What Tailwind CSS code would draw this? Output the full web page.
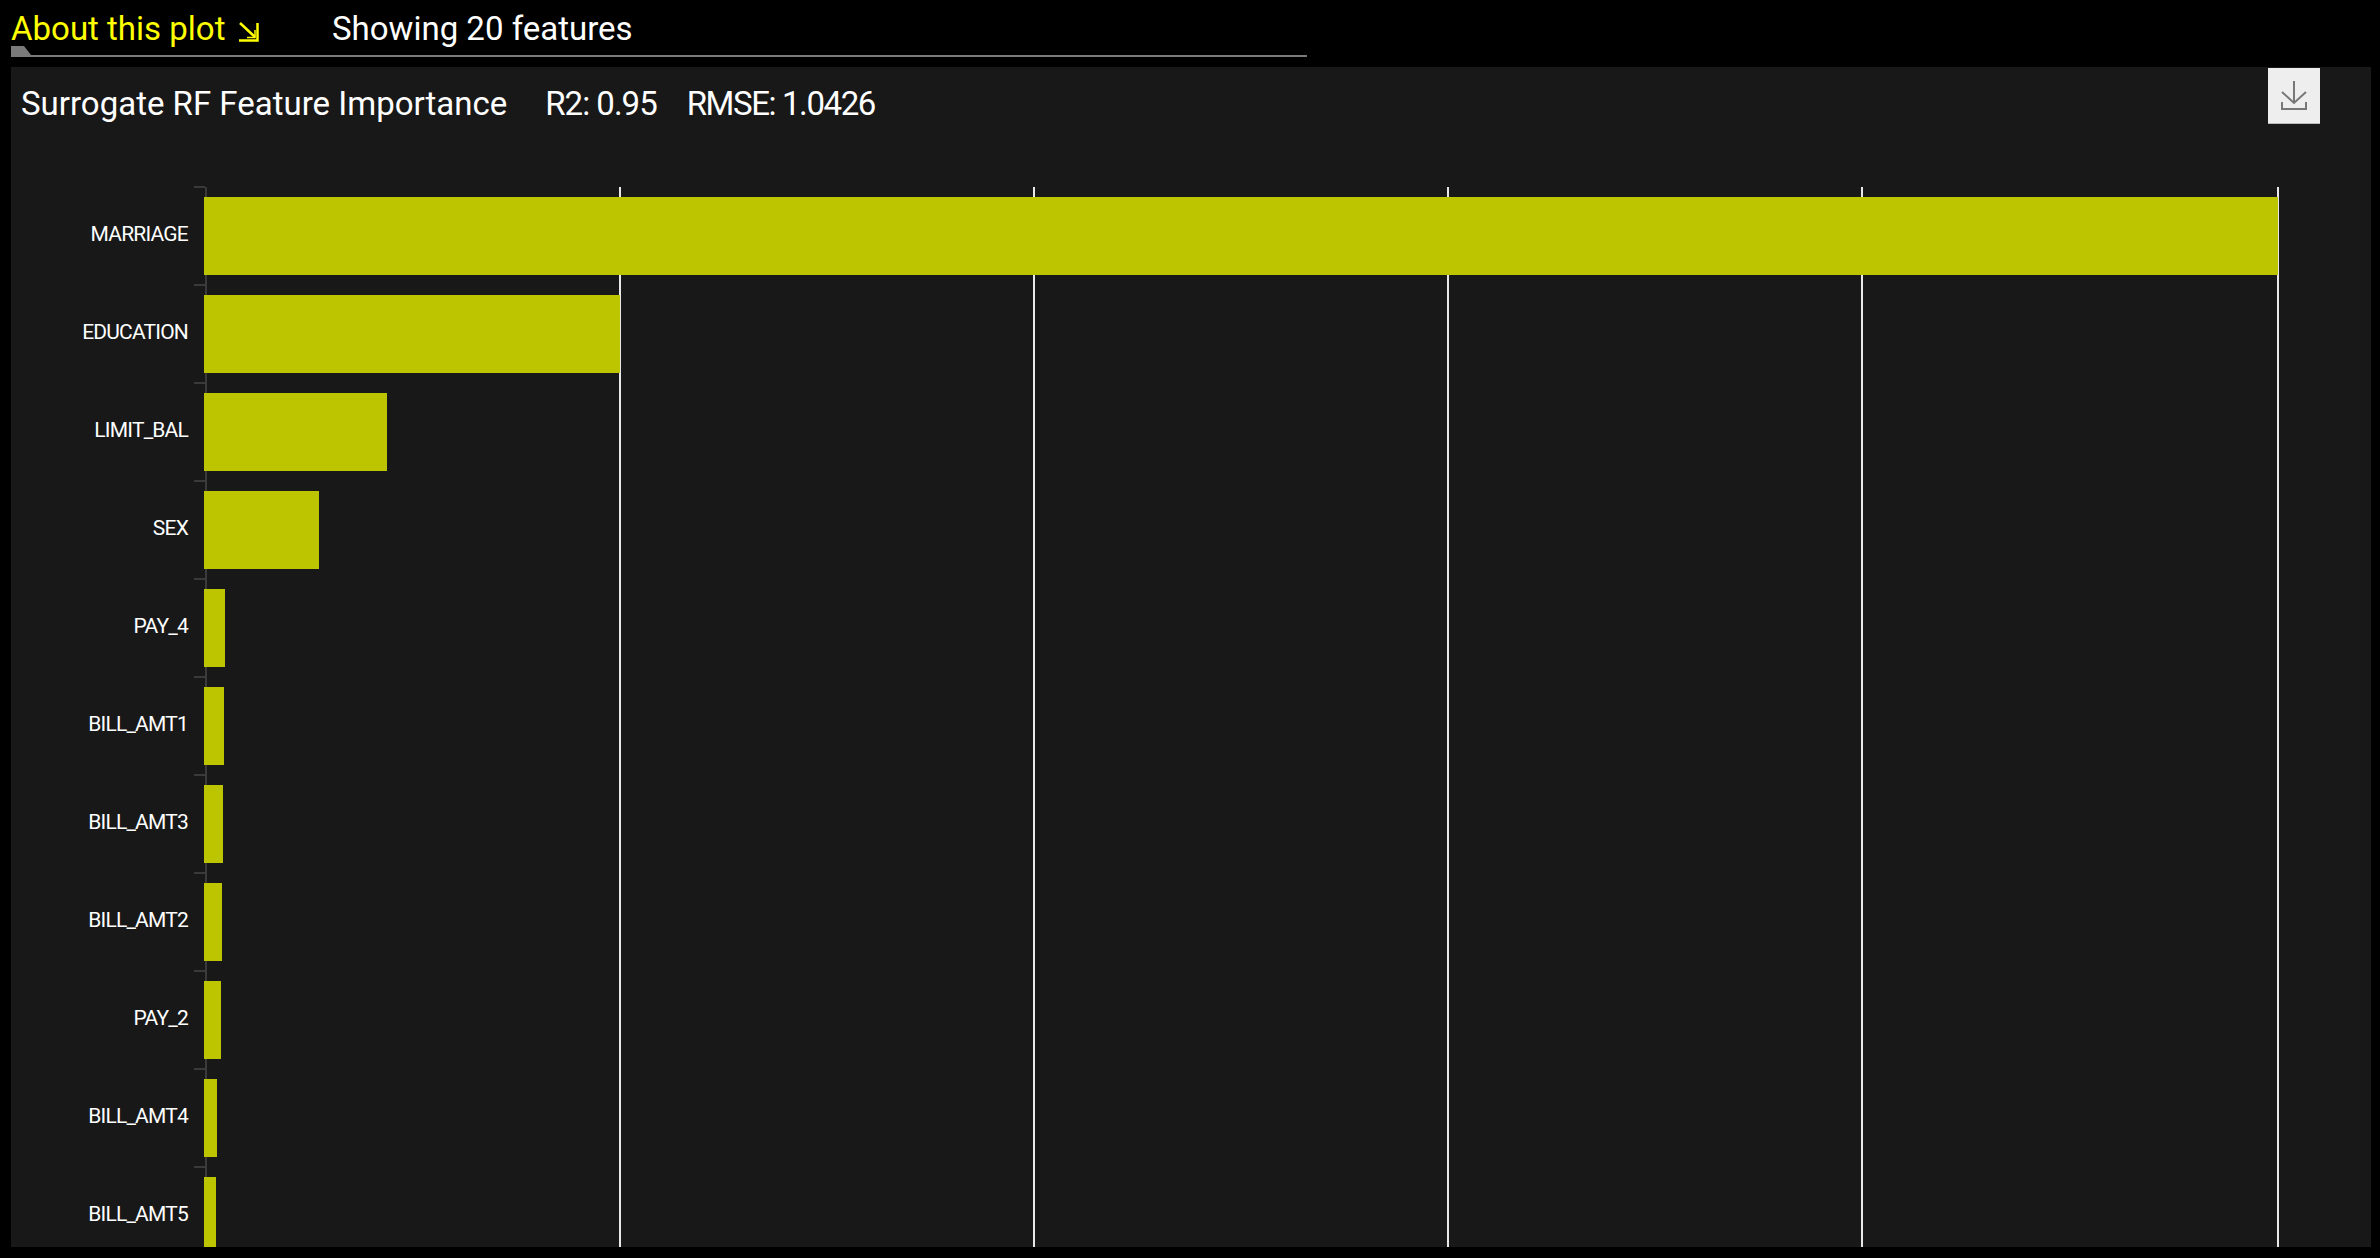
<!DOCTYPE html>
<html lang="en">
<head>
    <meta charset="UTF-8">
    <title>Surrogate RF Feature Importance</title>
    <script src="https://cdn.jsdelivr.net/npm/@tailwindcss/browser@4"></script>
</head>
<body class="bg-black h-[1258px] overflow-hidden text-white font-['Roboto',sans-serif]">
    <!-- Tabs -->
    <div class="relative w-[1296px] ml-[11px] h-[57px] border-b-2 border-[#7a7a7a]">
        <div class="flex items-center h-[55px] pt-[2px] text-[33px] leading-none">
            <span class="w-[321px] flex items-center text-[#ffff00] whitespace-nowrap">
                About this plot
                <svg class="ml-[14px] mt-[6px]" width="20" height="20" viewBox="0 0 20 20" fill="none" stroke="#ffff00" stroke-width="2.5">
                    <path d="M1 1L16 15"/>
                    <path d="M18.5 1V18.5H0"/>
                    <path d="M16 8V15.5H8" stroke-width="1.5"/>
                </svg>
            </span>
            <span class="whitespace-nowrap">Showing 20 features</span>
        </div>
        <div class="absolute left-0 bottom-0 w-[20px] h-[9px] bg-[#7a7a7a] [clip-path:polygon(0_0,13px_0,100%_100%,0_100%)]"></div>
    </div>

    <!-- Plot panel -->
    <div class="relative mt-[10px] mx-[11px] w-[2360px] h-[1180px] bg-[#181818] overflow-hidden">
        <div class="flex items-center h-[72px] px-[10px] text-[33px] leading-none whitespace-nowrap">
            <span>Surrogate RF Feature Importance</span>
            <span class="ml-[38px] tracking-[-1px]">R2: 0.95</span>
            <span class="ml-[30px] tracking-[-1.4px]">RMSE: 1.0426</span>
        </div>

        <button class="absolute left-[2257px] top-[1px] w-[52px] h-[56px] bg-[#eeeeee] border-b border-[#bbbbbb] flex items-center justify-center">
            <svg width="26" height="30" viewBox="0 0 26 30" fill="none" stroke="#777777" stroke-width="2">
                <path d="M13 0V22M1 11L13 22L25 11"/>
                <path d="M1 21V28H25V21"/>
            </svg>
        </button>

        <!-- Gridlines and axis -->
        <div class="absolute left-[194px] top-[120px] bottom-0 w-[2px] bg-[#3a3a3a]"></div>
        <div class="absolute left-[608px] top-[120px] bottom-0 w-[2px] bg-[#e8e8e8]"></div>
        <div class="absolute left-[1022px] top-[120px] bottom-0 w-[2px] bg-[#e8e8e8]"></div>
        <div class="absolute left-[1436px] top-[120px] bottom-0 w-[2px] bg-[#e8e8e8]"></div>
        <div class="absolute left-[1850px] top-[120px] bottom-0 w-[2px] bg-[#e8e8e8]"></div>
        <div class="absolute left-[2266px] top-[120px] bottom-0 w-[2px] bg-[#e8e8e8]"></div>

        <!-- Bars -->
        <div class="relative mt-[48px] text-[21px] leading-none tracking-[-0.8px]">
            <div class="relative flex h-[98px] items-center">
                <span class="w-[177px] shrink-0 text-right pb-[4px]">MARRIAGE</span>
                <span class="absolute left-[183px] top-[-1px] w-[11px] h-[2px] bg-[#3a3a3a]"></span>
                <div class="h-[78px] ml-[16px] bg-[#bcc500]" style="width: 2074px"></div>
            </div>
            <div class="relative flex h-[98px] items-center">
                <span class="w-[177px] shrink-0 text-right pb-[4px]">EDUCATION</span>
                <span class="absolute left-[183px] top-[-1px] w-[11px] h-[2px] bg-[#3a3a3a]"></span>
                <div class="h-[78px] ml-[16px] bg-[#bcc500]" style="width: 416px"></div>
            </div>
            <div class="relative flex h-[98px] items-center">
                <span class="w-[177px] shrink-0 text-right pb-[4px]">LIMIT_BAL</span>
                <span class="absolute left-[183px] top-[-1px] w-[11px] h-[2px] bg-[#3a3a3a]"></span>
                <div class="h-[78px] ml-[16px] bg-[#bcc500]" style="width: 183px"></div>
            </div>
            <div class="relative flex h-[98px] items-center">
                <span class="w-[177px] shrink-0 text-right pb-[4px]">SEX</span>
                <span class="absolute left-[183px] top-[-1px] w-[11px] h-[2px] bg-[#3a3a3a]"></span>
                <div class="h-[78px] ml-[16px] bg-[#bcc500]" style="width: 115px"></div>
            </div>
            <div class="relative flex h-[98px] items-center">
                <span class="w-[177px] shrink-0 text-right pb-[4px]">PAY_4</span>
                <span class="absolute left-[183px] top-[-1px] w-[11px] h-[2px] bg-[#3a3a3a]"></span>
                <div class="h-[78px] ml-[16px] bg-[#bcc500]" style="width: 21px"></div>
            </div>
            <div class="relative flex h-[98px] items-center">
                <span class="w-[177px] shrink-0 text-right pb-[4px]">BILL_AMT1</span>
                <span class="absolute left-[183px] top-[-1px] w-[11px] h-[2px] bg-[#3a3a3a]"></span>
                <div class="h-[78px] ml-[16px] bg-[#bcc500]" style="width: 20px"></div>
            </div>
            <div class="relative flex h-[98px] items-center">
                <span class="w-[177px] shrink-0 text-right pb-[4px]">BILL_AMT3</span>
                <span class="absolute left-[183px] top-[-1px] w-[11px] h-[2px] bg-[#3a3a3a]"></span>
                <div class="h-[78px] ml-[16px] bg-[#bcc500]" style="width: 19px"></div>
            </div>
            <div class="relative flex h-[98px] items-center">
                <span class="w-[177px] shrink-0 text-right pb-[4px]">BILL_AMT2</span>
                <span class="absolute left-[183px] top-[-1px] w-[11px] h-[2px] bg-[#3a3a3a]"></span>
                <div class="h-[78px] ml-[16px] bg-[#bcc500]" style="width: 18px"></div>
            </div>
            <div class="relative flex h-[98px] items-center">
                <span class="w-[177px] shrink-0 text-right pb-[4px]">PAY_2</span>
                <span class="absolute left-[183px] top-[-1px] w-[11px] h-[2px] bg-[#3a3a3a]"></span>
                <div class="h-[78px] ml-[16px] bg-[#bcc500]" style="width: 17px"></div>
            </div>
            <div class="relative flex h-[98px] items-center">
                <span class="w-[177px] shrink-0 text-right pb-[4px]">BILL_AMT4</span>
                <span class="absolute left-[183px] top-[-1px] w-[11px] h-[2px] bg-[#3a3a3a]"></span>
                <div class="h-[78px] ml-[16px] bg-[#bcc500]" style="width: 13px"></div>
            </div>
            <div class="relative flex h-[98px] items-center">
                <span class="w-[177px] shrink-0 text-right pb-[4px]">BILL_AMT5</span>
                <span class="absolute left-[183px] top-[-1px] w-[11px] h-[2px] bg-[#3a3a3a]"></span>
                <div class="h-[78px] ml-[16px] bg-[#bcc500]" style="width: 12px"></div>
            </div>
        </div>
    </div>
</body>
</html>
